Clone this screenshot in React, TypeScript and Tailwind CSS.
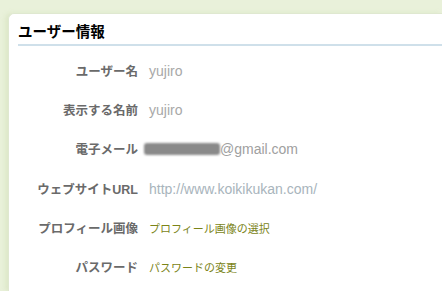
export default function App() {
  const rows: { label: React.ReactNode; value: React.ReactNode }[] = [
    { label: "ユーザー名", value: <span className="text-[#a8a8a8]">yujiro</span> },
    { label: "表示する名前", value: <span className="text-[#a8a8a8]">yujiro</span> },
    {
      label: "電子メール",
      value: (
        <span className="flex items-center text-[#a0a0a0]">
          <span className="-ml-[5px] inline-block h-[12px] w-[76px] rounded-[3px] bg-[#8a8a8a] blur-[1px]" />
          @gmail.com
        </span>
      ),
    },
    {
      label: (
        <>
          ウェブサイト<span className="font-['Liberation_Sans',sans-serif]">URL</span>
        </>
      ),
      value: <span className="text-[#a8b4bc]">http://www.koikikukan.com/</span>,
    },
    {
      label: "プロフィール画像",
      value: <span className="font-['Noto_Sans_CJK_JP',sans-serif] text-[11px] text-[#7b8418]">プロフィール画像の選択</span>,
    },
    {
      label: "パスワード",
      value: <span className="font-['Noto_Sans_CJK_JP',sans-serif] text-[11px] text-[#7b8418]">パスワードの変更</span>,
    },
  ];

  return (
    <div className="h-[291px] w-[442px] overflow-hidden bg-[#e9f1da] pl-[8px] pt-[13px] font-['Noto_Sans_CJK_JP',sans-serif]">
      <div className="h-full rounded-tl-[6px] border-l border-t border-[#dfe8d0] bg-white shadow-[-3px_0_4px_rgba(200,215,170,0.35)]">
        <div className="pl-[9px]">
          <h2 className="h-[30px] pt-[8px] text-[14.5px] font-bold leading-[17px] text-black">
            ユーザー情報
          </h2>
          <div className="h-[2px] bg-[#cfe0ea]" />
        </div>
        <div className="flex flex-col pt-[15px]">
          {rows.map((r, i) => (
            <div key={i} className="flex h-[39.2px] items-start">
              <div className="w-[129px] text-right text-[12.5px] font-bold leading-[20px] text-[#6a6a6a]">
                {r.label}
              </div>
              <div className="flex h-[20px] items-center pl-[11px] font-['Liberation_Sans','Noto_Sans_CJK_JP',sans-serif] text-[14px] leading-[20px]">
                {r.value}
              </div>
            </div>
          ))}
        </div>
      </div>
    </div>
  );
}
